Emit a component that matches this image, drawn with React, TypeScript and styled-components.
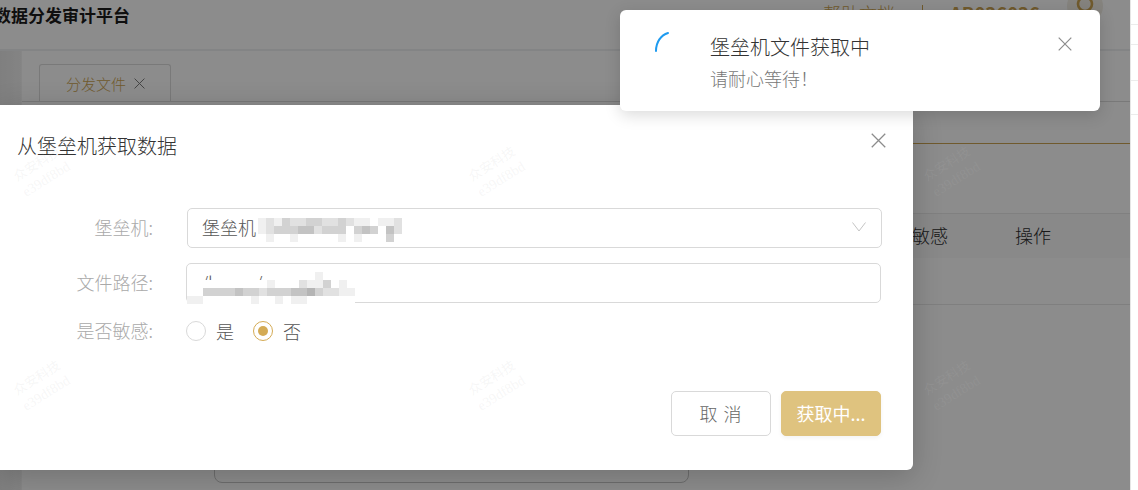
import React from 'react';
import styled, { createGlobalStyle } from 'styled-components';

const GlobalStyle = createGlobalStyle`
  html, body {
    margin: 0;
    padding: 0;
    background: #fff;
    font-family: "Noto Sans CJK SC", "Liberation Sans", sans-serif;
    font-weight: 300;
  }
  * { box-sizing: border-box; }
`;

const Viewport = styled.div`
  position: relative;
  display: flex;
  width: 1138px;
  height: 490px;
  overflow: hidden;
`;

const Page = styled.div`
  position: relative;
  width: 1130px;
  height: 490px;
  overflow: hidden;
  background: #fff;
`;

const Header = styled.header`
  display: flex;
  align-items: flex-start;
  height: 51px;
  border-bottom: 2px solid #eef0f3;
`;

const Brand = styled.div`
  margin: 3px 0 0 -6px;
  font-size: 17px;
  line-height: 24px;
  font-weight: 700;
  color: #1c1c1c;
`;

const HeaderRight = styled.div`
  display: flex;
  align-items: flex-start;
  margin-left: auto;
  margin-right: 27px;
  color: #cda552;
`;

const HelpLink = styled.span`
  margin-top: 1px;
  font-size: 18px;
  line-height: 24px;
`;

const Divider = styled.span`
  width: 1px;
  height: 20px;
  margin: 5px 27px 0;
  background: #cda552;
`;

const UserCode = styled.span`
  margin-top: 1px;
  width: 117px;
  font-size: 18.5px;
  line-height: 24px;
  font-weight: 700;
`;

const Avatar = styled.span`
  display: flex;
  align-items: center;
  justify-content: center;
  width: 36px;
  height: 36px;
  margin-top: -12px;
  border-radius: 50%;
  background: #f2efe6;
`;

const Body = styled.div`
  display: flex;
  height: 439px;
`;

const Sidebar = styled.aside`
  width: 22px;
  background: linear-gradient(90deg, #e8e8e8, #f0f0f0);
  border-right: 1px solid #f5f5f5;
`;

const Main = styled.main`
  flex: 1;
  padding-top: 13px;
  min-width: 0;
`;

const TabBar = styled.div`
  display: flex;
  height: 38px;
  padding-left: 17px;
  border-bottom: 1px solid #dcdcdc;
`;

const Tab = styled.div`
  display: flex;
  align-items: center;
  gap: 8px;
  width: 132px;
  height: 38px;
  padding-left: 26px;
  border: 1px solid #dcdcdc;
  border-bottom: 0;
  border-radius: 3px 3px 0 0;
  font-size: 15px;
  color: #cda552;
`;

const PanelRule = styled.div`
  height: 1px;
  margin-top: 41px;
  background: #cda552;
`;

const TableHead = styled.div`
  display: grid;
  grid-template-columns: 1fr 139px 115px;
  align-items: center;
  height: 45px;
  margin-top: 69px;
  padding-bottom: 3px;
  border-top: 1px solid #eaeaea;
  background: #f9f9f9;
  font-size: 18px;
  color: #2e2e2e;
`;

const TableRow = styled.div`
  height: 47px;
  border-bottom: 1px solid #e8e8e8;
`;

const BottomCard = styled.div`
  width: 475px;
  height: 100px;
  margin: 78px 0 0 192px;
  border: 1px solid #c8c8c8;
  border-radius: 8px;
`;

const Mask = styled.div`
  position: absolute;
  inset: 0;
  background: rgba(0, 0, 0, 0.45);
`;

const Dialog = styled.section`
  position: absolute;
  top: 105px;
  left: 0;
  display: flex;
  flex-direction: column;
  width: 913px;
  height: 365px;
  background: #fff;
  border-radius: 0 0 6px 0;
  box-shadow: 0 6px 30px rgba(0, 0, 0, 0.2);
`;

const DialogHead = styled.div`
  display: flex;
  align-items: flex-start;
  justify-content: space-between;
  height: 103px;
  padding: 27px 27px 0 17px;
`;

const DialogTitle = styled.h2`
  margin: 0;
  font-size: 20px;
  line-height: 28px;
  font-weight: 300;
  color: #333;
`;

const CloseButton = styled.button<{ $top: number }>`
  display: flex;
  padding: 0;
  margin-top: ${p => p.$top}px;
  border: 0;
  background: none;
`;

const Form = styled.div`
  display: flex;
  flex-direction: column;
  gap: 15px;
  padding-right: 31px;
`;

const FormRow = styled.div<{ $height: number; $shift?: number }>`
  display: flex;
  align-items: center;
  height: ${p => p.$height}px;
  margin-top: ${p => p.$shift ?? 0}px;
`;

const Label = styled.label`
  flex: none;
  width: 153px;
  padding-bottom: 2px;
  text-align: right;
  font-size: 18px;
  color: #a9a9a9;
`;

const Field = styled.div<{ $inset?: number }>`
  position: relative;
  display: flex;
  align-items: center;
  justify-content: space-between;
  flex: 1;
  height: 40px;
  margin-left: ${p => 34 - (p.$inset ?? 0)}px;
  margin-right: ${p => p.$inset ?? 0}px;
  padding: 0 15px 2px 14px;
  border: 1px solid #d9d9d9;
  border-radius: 5px;
  font-size: 18px;
  color: #555;
`;

const Mosaic = styled.div<{ $top: number; $left: number; $cols: number }>`
  position: absolute;
  top: ${p => p.$top}px;
  left: ${p => p.$left}px;
  display: grid;
  grid-template-columns: repeat(${p => p.$cols}, 8px);
  grid-auto-rows: 8px;
`;

const MosaicCell = styled.span<{ $shade: number }>`
  background: ${p =>
    p.$shade < 0
      ? 'transparent'
      : `rgb(${255 - p.$shade * 15}, ${255 - p.$shade * 15}, ${255 - p.$shade * 15})`};
`;

const RadioGroup = styled.div`
  display: flex;
  align-items: center;
  margin-left: 33px;
  gap: 19px;
`;

const RadioOption = styled.span`
  display: flex;
  align-items: center;
  gap: 10px;
  font-size: 18px;
  color: #555;
`;

const RadioMark = styled.span<{ $checked?: boolean }>`
  display: flex;
  align-items: center;
  justify-content: center;
  width: 20px;
  height: 20px;
  border-radius: 50%;
  border: 1px solid ${p => (p.$checked ? '#d4ab55' : '#d9d9d9')};
  &::after {
    content: '';
    width: 10px;
    height: 10px;
    border-radius: 50%;
    background: ${p => (p.$checked ? '#d4ab55' : 'transparent')};
  }
`;

const DialogFooter = styled.div`
  display: flex;
  justify-content: flex-end;
  gap: 10px;
  margin-top: auto;
  padding: 0 32px 34px 0;
`;

const FooterButton = styled.button<{ $primary?: boolean }>`
  width: 100px;
  height: 45px;
  padding: 0 0 2px;
  border-radius: 5px;
  border: 1px solid ${p => (p.$primary ? '#dfc37f' : '#d9d9d9')};
  background: ${p => (p.$primary ? '#dfc37f' : '#fff')};
  color: ${p => (p.$primary ? '#fff' : '#666')};
  box-shadow: ${p => (p.$primary ? '0 2px 4px rgba(0,0,0,.05)' : 'none')};
  font-family: inherit;
  font-size: 18px;
  font-weight: ${p => (p.$primary ? 400 : 300)};
  letter-spacing: ${p => (p.$primary ? 0 : '1px')};
  white-space: pre;
`;

const WatermarkLayer = styled.div`
  position: absolute;
  inset: 0;
  display: grid;
  grid-template-columns: repeat(3, 455px);
  grid-template-rows: repeat(2, 214px);
  padding: 152px 0 0 5px;
  pointer-events: none;
`;

const Watermark = styled.div`
  width: 80px;
  height: 50px;
  transform: rotate(-32deg);
  text-align: center;
  font-size: 13px;
  line-height: 18px;
  font-weight: 400;
  color: rgba(190, 190, 190, 0.13);
`;

const WatermarkCode = styled.span`
  font-family: "Liberation Serif", serif;
  font-size: 14px;
`;

const Notice = styled.aside`
  position: absolute;
  top: 10px;
  left: 620px;
  display: flex;
  width: 480px;
  height: 101px;
  padding: 20px 28px 0 34px;
  background: #fff;
  border-radius: 6px;
  box-shadow: 0 4px 16px rgba(0, 0, 0, 0.15);
`;

const NoticeIcon = styled.svg`
  flex: none;
  margin-top: 1px;
  margin-right: 36px;
`;

const NoticeText = styled.div`
  flex: 1;
`;

const NoticeTitle = styled.div`
  margin-top: 2px;
  font-size: 20px;
  line-height: 30px;
  color: #333;
`;

const NoticeDesc = styled.div`
  margin-top: 3px;
  font-size: 18px;
  line-height: 26px;
  color: #777;
`;

const ScrollStrip = styled.div`
  flex: none;
  width: 8px;
  height: 490px;
  padding-top: 24px;
  background: #fff;
  border-left: 1px solid #e6e6e6;
`;

const StripLine = styled.div<{ $gap: number }>`
  height: 1px;
  margin-bottom: ${p => p.$gap}px;
  background: #ececec;
`;

const selectBlur = [
  [1, 2, 1, 3, 2, 2, 3, 3, 2, 2, 3, 2, 1, 1, 0, 1, 1, 2],
  [1, 2, 3, 3, 3, 4, 4, 2, 3, 3, 3, 0, 3, 4, 3, 0, 4, 2],
  [0, 1, 0, 0, 1, 0, 0, 0, 0, 0, 1, 0, 1, 0, 0, 0, 3, 0],
];

// first row lets the top of the path text show through
const pathBlur = [
  [-1, -1, -1, -1, -1, -1, -1, -1, -1, -1, -1, -1, -1, -1, -1, -1, 1, -1, -1, -1, -1],
  [0, 0, 0, 0, 0, 0, 0, 0, 0, 0, 1, 0, 0, 0, 2, 1, 1, 3, 0, 1, 0],
  [0, 0, 3, 3, 3, 3, 4, 3, 3, 2, 3, 3, 3, 4, 4, 5, 3, 2, 2, 1, 1],
  [1, 1, 0, 0, 0, 0, 0, 0, 1, 0, 0, 1, 0, 1, 1, 0, 0, 0, 0, 0, 0],
];

const watermarkSpots = [0, 1, 2, 3, 4, 5];

const CrossIcon: React.FC<{ size: number; color?: string }> = ({ size, color = '#8c8c8c' }) => (
  <svg width={size} height={size} viewBox="0 0 14 14" fill="none" stroke={color} strokeWidth={1.2}>
    <path d="M.7.7l12.6 12.6M13.3.7L.7 13.3" />
  </svg>
);

const BlurPatch: React.FC<{ rows: number[][]; top: number; left: number }> = ({ rows, top, left }) => (
  <Mosaic $top={top} $left={left} $cols={rows[0].length}>
    {rows.flat().map((shade, i) => (
      <MosaicCell key={i} $shade={shade} />
    ))}
  </Mosaic>
);

const App: React.FC = () => {
  return (
    <Viewport>
      <GlobalStyle />
      <Page>
        <Header>
          <Brand>数据分发审计平台</Brand>
          <HeaderRight>
            <HelpLink>帮助文档</HelpLink>
            <Divider />
            <UserCode>AB036036</UserCode>
            <Avatar>
              <svg width="20" height="20" viewBox="0 0 20 20" fill="none" stroke="#cda552" strokeWidth={2.6}>
                <circle cx="10" cy="8" r="7" />
              </svg>
            </Avatar>
          </HeaderRight>
        </Header>
        <Body>
          <Sidebar />
          <Main>
            <TabBar>
              <Tab>
                分发文件
                <CrossIcon size={11} color="#777" />
              </Tab>
            </TabBar>
            <PanelRule />
            <TableHead>
              <span />
              <span>是否敏感</span>
              <span>操作</span>
            </TableHead>
            <TableRow />
            <BottomCard />
          </Main>
        </Body>
        <Mask />
        <Dialog>
          <DialogHead>
            <DialogTitle>从堡垒机获取数据</DialogTitle>
            <CloseButton $top={1}>
              <CrossIcon size={15} />
            </CloseButton>
          </DialogHead>
          <Form>
            <FormRow $height={40}>
              <Label>堡垒机:</Label>
              <Field>
                堡垒机
                <svg width="14" height="10" viewBox="0 0 14 10" fill="none" stroke="#c4c4c4">
                  <path d="M.5.5L7 9l6.5-8.5" />
                </svg>
                <BlurPatch rows={selectBlur} top={9} left={70} />
              </Field>
            </FormRow>
            <FormRow $height={40}>
              <Label>文件路径:</Label>
              <Field $inset={1}>
                /home/
                <BlurPatch rows={pathBlur} top={8} left={0} />
              </Field>
            </FormRow>
            <FormRow $height={20} $shift={3}>
              <Label>是否敏感:</Label>
              <RadioGroup>
                <RadioOption>
                  <RadioMark />是
                </RadioOption>
                <RadioOption>
                  <RadioMark $checked />否
                </RadioOption>
              </RadioGroup>
            </FormRow>
          </Form>
          <DialogFooter>
            <FooterButton>取 消</FooterButton>
            <FooterButton $primary>获取中...</FooterButton>
          </DialogFooter>
        </Dialog>
        <WatermarkLayer>
          {watermarkSpots.map(i => (
            <Watermark key={i}>
              众安科技
              <br />
              <WatermarkCode>e39df8bd</WatermarkCode>
            </Watermark>
          ))}
        </WatermarkLayer>
        <Notice>
          <NoticeIcon width="20" height="22" viewBox="0 0 20 22" fill="none" stroke="#1e9bf0" strokeWidth={2} strokeLinecap="round">
            <path d="M2 20C2 11 7 4 14 2" />
          </NoticeIcon>
          <NoticeText>
            <NoticeTitle>堡垒机文件获取中</NoticeTitle>
            <NoticeDesc>请耐心等待！</NoticeDesc>
          </NoticeText>
          <CloseButton $top={7}>
            <CrossIcon size={14} />
          </CloseButton>
        </Notice>
      </Page>
      <ScrollStrip>
        <StripLine $gap={19} />
        <StripLine $gap={35} />
        <StripLine $gap={33} />
        <StripLine $gap={0} />
      </ScrollStrip>
    </Viewport>
  );
};

export default App;
